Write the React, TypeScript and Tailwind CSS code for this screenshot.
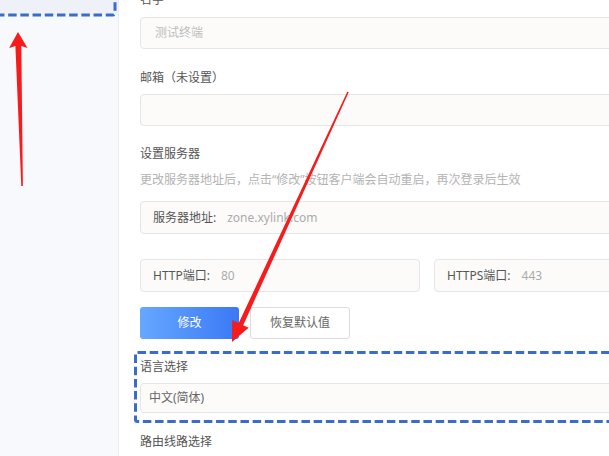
import React from 'react';

const FONT = '"Noto Sans", "Noto Sans CJK SC", sans-serif';

function Field({ children, className = '' }: { children?: React.ReactNode; className?: string }) {
  return (
    <div
      className={`flex items-center rounded-[4px] border border-[#e6e6e6] bg-[#fcfbfa] text-[12px] ${className}`}
    >
      {children}
    </div>
  );
}

function Label({ children, className = '' }: { children: React.ReactNode; className?: string }) {
  return <p className={`text-[12px] leading-[18px] text-[#555] ${className}`}>{children}</p>;
}

export default function App() {
  return (
    <div
      className="relative flex h-[456px] w-[609px] overflow-hidden bg-white"
      style={{ fontFamily: FONT }}
    >
      {/* sidebar */}
      <aside className="relative w-[119px] shrink-0 border-r border-[#eceef2] bg-[#f7f9fc]">
        <div className="h-[15px] bg-[#eef1f7]" />
        <svg className="absolute left-0 top-0" width="119" height="18">
          <rect
            x="-10"
            y="-10"
            width="125"
            height="25"
            rx="2"
            fill="none"
            stroke="#3a6cc9"
            strokeWidth="3"
            strokeDasharray="8.5 3.7"
          />
        </svg>
      </aside>

      {/* main */}
      <main className="flex-1 pl-[21px]">
        <div className="w-[574px]">
          <Label className="-mt-[9px]">名字</Label>
          <Field className="mt-[8px] h-[32px] pl-[14px] text-[#bdbdbd]">测试终端</Field>

          <Label className="mt-[20px]">邮箱（未设置）</Label>
          <Field className="mt-[7px] h-[32px]" />

          <Label className="mt-[19px]">设置服务器</Label>
          <p className="mt-[8px] text-[12px] leading-[18px] text-[#b3b3b3]">
            更改服务器地址后，点击“修改”按钮客户端会自动重启，再次登录后生效
          </p>
          <Field className="mt-[12px] h-[33px] pl-[12px]">
            <span className="text-[#555]">服务器地址:</span>
            <span className="ml-[11px] text-[#ababab]">zone.xylink.com</span>
          </Field>

          <div className="mt-[25px] flex gap-[14px]">
            <Field className="h-[33px] flex-1 pl-[12px]">
              <span className="text-[#555]">HTTP端口:</span>
              <span className="ml-[11px] text-[#ababab]">80</span>
            </Field>
            <Field className="h-[33px] flex-1 pl-[12px]">
              <span className="text-[#555]">HTTPS端口:</span>
              <span className="ml-[11px] text-[#ababab]">443</span>
            </Field>
          </div>

          <div className="mt-[15px] flex gap-[11px]">
            <button className="h-[32px] w-[99px] rounded-[3px] bg-gradient-to-r from-[#66a7ff] to-[#3b78f5] text-[12px] text-white">
              修改
            </button>
            <button className="h-[32px] w-[100px] rounded-[3px] border border-[#dcdcdc] bg-white text-[12px] text-[#666]">
              恢复默认值
            </button>
          </div>

          <div className="relative mt-[19px]">
            <Label>语言选择</Label>
            <Field className="mt-[7px] h-[30px] pl-[8px] text-[#666]">中文(简体)</Field>
            <svg className="pointer-events-none absolute -left-[6.5px] -top-[7.5px]" width="620" height="72">
              <rect
                x="1.5"
                y="1.5"
                width="610"
                height="69"
                rx="2"
                fill="none"
                stroke="#3a6cc9"
                strokeWidth="3"
                strokeDasharray="8.5 3.7"
              />
            </svg>
          </div>

          <Label className="mt-[20px]">路由线路选择</Label>
        </div>
      </main>

      {/* red annotation arrows */}
      <svg className="pointer-events-none absolute left-0 top-0" width="609" height="456">
        <polygon
          fill="#f71b1b"
          points="18,32 27.5,48 21.3,46 22.9,186 21.3,186 15.4,46 9.2,48"
        />
        <polygon
          fill="#f71b1b"
          points="348.7,92.3 347.3,91.7 238.6,323.2 232.2,320.1 232,342 248.6,327.7 243.2,325.2"
        />
      </svg>
    </div>
  );
}
